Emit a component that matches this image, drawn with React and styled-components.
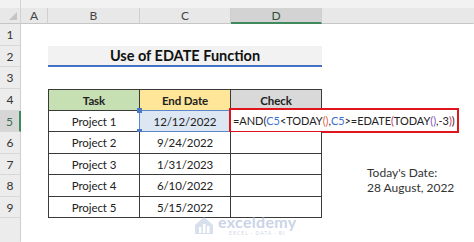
import React from "react";
import styled, { createGlobalStyle } from "styled-components";

const GlobalStyle = createGlobalStyle`
  html, body {
    margin: 0;
    padding: 0;
    background: #ffffff;
  }
  body {
    font-family: Lato, "Open Sans", "Liberation Sans", sans-serif;
    overflow: hidden;
  }
`;

const Sheet = styled.div`
  position: relative;
  width: 474px;
  height: 242px;
  overflow: hidden;
  display: grid;
  grid-template-columns: 21px 27px 92px 91px 91px 42px 1fr;
  grid-template-rows: 24px 22px 21px 22px 22px 21px 22px 21px 22px 21px 1fr;
  background: #ffffff;
  color: #222;
`;

const Corner = styled.div`
  grid-column: 1;
  grid-row: 1;
  background: linear-gradient(#f2f2f2 0 8px, #e8e8e8 8px);
  border-right: 1px solid #d2d2d2;
  border-bottom: 1px solid #c6c6c6;
  position: relative;
  &::after {
    content: "";
    position: absolute;
    right: 3px;
    bottom: 3px;
    border-left: 8px solid transparent;
    border-bottom: 8px solid #c4c4c4;
  }
`;

const ColHead = styled.div`
  grid-row: 1;
  grid-column: ${(p) => p.$col} / span ${(p) => p.$span || 1};
  margin-top: 8px;
  display: flex;
  align-items: center;
  justify-content: center;
  font-size: 12px;
  color: ${(p) => (p.$active ? "#2f4f3a" : "#444")};
  background: ${(p) => (p.$active ? "#d3d3d3" : "#e8e8e8")};
  border-right: 1px solid ${(p) => (p.$last ? "transparent" : "#cfcfcf")};
  border-bottom: ${(p) => (p.$active ? "2px solid #3f8a5c" : "1px solid #c6c6c6")};
`;

const TopStrip = styled.div`
  grid-row: 1;
  grid-column: 2 / -1;
  height: 8px;
  background: #f2f2f2;
`;

const RowHead = styled.div`
  grid-column: 1;
  grid-row: ${(p) => p.$row};
  display: flex;
  align-items: center;
  justify-content: center;
  font-size: 12px;
  color: ${(p) => (p.$active ? "#3f6e52" : "#333")};
  background: ${(p) => (p.$active ? "#d6d6d6" : "#ececec")};
  border-right: ${(p) => (p.$active ? "2px solid #3f8a5c" : "1px solid #cfcfcf")};
  border-bottom: 1px solid ${(p) => (p.$blank ? "transparent" : "#d8d8d8")};
`;

const Title = styled.div`
  grid-column: 3 / 6;
  grid-row: 3;
  display: flex;
  align-items: center;
  justify-content: center;
  background: #f2f2f2;
  border-bottom: 2px solid #4472c4;
  font-weight: 700;
  font-size: 14.5px;
  color: #111;
`;

const Cell = styled.div`
  position: relative;
  grid-column: ${(p) => p.$col};
  grid-row: ${(p) => p.$row};
  display: flex;
  align-items: center;
  justify-content: center;
  font-size: 11.5px;
  letter-spacing: -0.1px;
  font-weight: ${(p) => (p.$bold ? 700 : 400)};
  background: ${(p) => p.$bg || "#ffffff"};
  border-right: 1px solid #3a3a3a;
  border-bottom: 1px solid #3a3a3a;
  border-left: ${(p) => (p.$left ? "1px solid #3a3a3a" : "none")};
  border-top: ${(p) => (p.$top ? "1px solid #3a3a3a" : "none")};
  color: #222;
`;

const Selection = styled.div`
  position: absolute;
  inset: -1px -1px -1px -1px;
  border: 1.5px solid #5a86cc;
  pointer-events: none;
`;

const Handle = styled.span`
  position: absolute;
  left: -3px;
  ${(p) => (p.$bottom ? "bottom: -3px;" : "top: -3px;")}
  width: 5px;
  height: 5px;
  background: #4a78c4;
`;

const FormulaBox = styled.div`
  position: absolute;
  left: -2px;
  top: -3px;
  width: 230px;
  bottom: -2px;
  border: 2px solid #e0141c;
  background: #ffffff;
  display: flex;
  align-items: center;
  padding-left: 2px;
  font-size: 11px;
  letter-spacing: -0.05px;
  white-space: nowrap;
  color: #222;
  box-sizing: border-box;
`;

const Ref = styled.span`
  color: ${(p) => p.$color};
`;

const Note = styled.div`
  grid-column: 7;
  grid-row: 8 / 10;
  display: flex;
  flex-direction: column;
  justify-content: flex-end;
  padding: 0 0 2px 3px;
  font-size: 12px;
  line-height: 15px;
  color: #333;
  white-space: nowrap;
`;

const Watermark = styled.div`
  position: absolute;
  left: 193px;
  top: 214px;
  display: flex;
  align-items: center;
  gap: 3px;
  opacity: 0.55;
  pointer-events: none;
`;

const MarkText = styled.div`
  display: flex;
  flex-direction: column;
  align-items: center;
  line-height: 1;
`;

const MarkName = styled.span`
  font-size: 16px;
  font-weight: 700;
  color: #9fb2d4;
  letter-spacing: 0.3px;
`;

const MarkSub = styled.span`
  font-size: 5px;
  color: #a8b6cc;
  letter-spacing: 1px;
  margin-top: 1px;
`;

const tasks = [
  { task: "Project 1", date: "12/12/2022" },
  { task: "Project 2", date: "9/24/2022" },
  { task: "Project 3", date: "1/31/2023" },
  { task: "Project 4", date: "6/10/2022" },
  { task: "Project 5", date: "5/15/2022" },
];

const colLetters = ["A", "B", "C", "D"];

export default function App() {
  return (
    <>
      <GlobalStyle />
      <Sheet>
        <Corner />
        <TopStrip />
        {colLetters.map((l, i) => (
          <ColHead key={l} $col={i + 2} $active={l === "D"}>
            {l}
          </ColHead>
        ))}
        <ColHead $col={6} $span={2} $last />

        {[1, 2, 3, 4, 5, 6, 7, 8, 9].map((n) => (
          <RowHead key={n} $row={n + 1} $active={n === 5}>
            {n}
          </RowHead>
        ))}
        <RowHead $row={11} $blank />

        <Title>Use of EDATE Function</Title>

        <Cell $col={3} $row={5} $left $top $bold $bg="#c6e0b4">
          Task
        </Cell>
        <Cell $col={4} $row={5} $top $bold $bg="#ffe699">
          End Date
        </Cell>
        <Cell $col={5} $row={5} $top $bold $bg="#d9d9d9">
          Check
        </Cell>

        {tasks.map((t, i) => (
          <React.Fragment key={t.task}>
            <Cell $col={3} $row={i + 6} $left>
              {t.task}
            </Cell>
            <Cell $col={4} $row={i + 6} $bg={i === 0 ? "#dde6f3" : undefined}>
              {t.date}
              {i === 0 && (
                <Selection>
                  <Handle />
                  <Handle $bottom />
                </Selection>
              )}
            </Cell>
            <Cell $col={5} $row={i + 6}>
              {i === 0 && (
                <FormulaBox>
                  =AND(<Ref $color="#3b6fd1">C5</Ref>&lt;TODAY
                  <Ref $color="#e0643c">()</Ref>,<Ref $color="#3b6fd1">C5</Ref>
                  &gt;=EDATE<Ref $color="#d0306a">(</Ref>TODAY
                  <Ref $color="#8a4fc0">()</Ref>,-3<Ref $color="#d0306a">)</Ref>)
                </FormulaBox>
              )}
            </Cell>
          </React.Fragment>
        ))}

        <Note>
          <span>Today's Date:</span>
          <span>28 August, 2022</span>
        </Note>

        <Watermark>
          <svg width="22" height="20" viewBox="0 0 22 20">
            <path d="M2 10 L11 2 L20 10 L20 19 L2 19 Z" fill="#b9c7e0" />
            <rect x="6" y="12" width="2.5" height="6" fill="#ffffff" />
            <rect x="10" y="9" width="2.5" height="9" fill="#ffffff" />
            <rect x="14" y="11" width="2.5" height="7" fill="#ffffff" />
          </svg>
          <MarkText>
            <MarkName>exceldemy</MarkName>
            <MarkSub>EXCEL · DATA · BI</MarkSub>
          </MarkText>
        </Watermark>
      </Sheet>
    </>
  );
}
